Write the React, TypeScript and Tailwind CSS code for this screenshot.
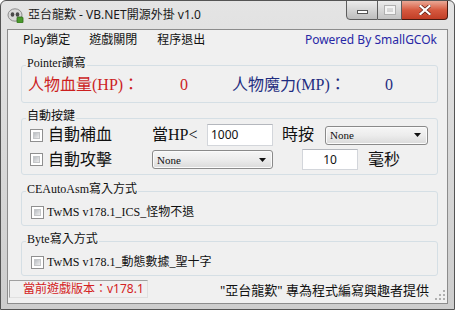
import React from "react";

const SERIF = "font-['Liberation_Serif','Noto_Sans_CJK_TC',serif]";
const SANS = "font-['Noto_Sans','Noto_Sans_CJK_TC',sans-serif]";

function Check() {
  return (
    <span className="w-[13px] h-[13px] border border-[#8f8f8f] bg-white p-[2px] flex shrink-0">
      <span className="flex-1 bg-linear-to-br from-[#b9bdc2] to-[#eeeeee] border border-[#c4c6c8]" />
    </span>
  );
}

function Arrow() {
  return (
    <svg width="7" height="4" viewBox="0 0 7 4" className="ml-auto shrink-0">
      <path d="M0 0H7L3.5 4Z" fill="#111" />
    </svg>
  );
}

function Select({ w, h }: { w: string; h: string }) {
  return (
    <div
      className={`${w} ${h} rounded-[3px] border border-[#8a8a8a] bg-linear-to-b from-[#f6f6f6] via-[#ececec] to-[#dadada] flex items-center pl-[4px] pr-[6px] shadow-[inset_0_0_0_1px_#fbfbfb]`}
    >
      <span className={`${SERIF} text-[11px] leading-[12px] text-[#111]`}>None</span>
      <Arrow />
    </div>
  );
}

function Group({
  label,
  className,
  children,
}: {
  label: string;
  className: string;
  children: React.ReactNode;
}) {
  return (
    <div className={`relative border border-[#d5dfe5] rounded-[3px] ${className}`}>
      <span
        className={`absolute top-[-9px] left-[4px] bg-[#f0f0f0] px-[1px] ${SERIF} text-[12px] leading-[13px] text-[#111] whitespace-nowrap`}
      >
        {label}
      </span>
      {children}
    </div>
  );
}

export default function App() {
  return (
    <div className="w-[455px] h-[310px] border border-[#545454] rounded-t-[6px] bg-linear-to-b from-[#e4e4e4] to-[#cdcdcd] flex flex-col overflow-hidden">
      {/* Title bar */}
      <div className="h-[28px] flex items-start shrink-0">
        <div className="flex items-center h-[28px] pl-[6px]">
          <svg width="17" height="16" viewBox="0 0 17 16">
            <ellipse cx="8" cy="8" rx="7" ry="6.2" fill="#d8d8d8" stroke="#8d8d8d" strokeWidth="1" />
            <ellipse cx="5.5" cy="7.5" rx="1.8" ry="2.2" fill="#4a4a4a" />
            <ellipse cx="10.5" cy="7.5" rx="1.8" ry="2.2" fill="#4a4a4a" />
            <rect x="10" y="10" width="6" height="6" rx="1" fill="#4b9a2d" stroke="#2f6a1a" strokeWidth="0.8" />
          </svg>
          <span className={`${SANS} ml-[4px] text-[12px] leading-[14px] text-[#1a1a1a]`}>
            亞台龍歎 - VB.NET開源外掛 v1.0
          </span>
        </div>
        <div className="ml-auto mr-[6px] flex h-[20px] -mt-[1px]">
          <div className="w-[32px] h-[20px] border border-[#5d5d5d] rounded-bl-[4px] bg-linear-to-b from-[#ececec] to-[#bdbdbd] flex items-center justify-center">
            <span className="w-[11px] h-[4px] bg-white border border-[#555] mt-[4px]" />
          </div>
          <div className="w-[24px] h-[20px] border-y border-r border-[#5d5d5d] bg-linear-to-b from-[#ececec] to-[#c3c3c3] flex items-center justify-center">
            <span className="w-[10px] h-[8px] border-[2px] border-[#f4f4f4] outline outline-1 outline-[#b0b0b0]" />
          </div>
          <div className="w-[46px] h-[20px] border-y border-r border-[#4a1a10] rounded-br-[4px] bg-linear-to-b from-[#e9a896] via-[#d6593f] to-[#c13e26] flex items-center justify-center">
            <svg width="12" height="10" viewBox="0 0 12 10">
              <path d="M1.5 1L10.5 9M10.5 1L1.5 9" stroke="#5a1a10" strokeWidth="3.6" strokeLinecap="square" />
              <path d="M1.5 1L10.5 9M10.5 1L1.5 9" stroke="#ffffff" strokeWidth="2.2" strokeLinecap="square" />
            </svg>
          </div>
        </div>
      </div>

      {/* Frame + client */}
      <div className="flex flex-1 px-[6px] pb-[5px]">
        <div className="flex-1 border border-[#8c8c8c] bg-[#f0f0f0] flex flex-col">
          {/* Menu */}
          <div className={`h-[18px] flex items-center ${SANS} text-[12px] leading-[14px] text-[#111] shrink-0 pt-[2px]`}>
            <span className="ml-[15px]">Play鎖定</span>
            <span className="ml-[19px]">遊戲關閉</span>
            <span className="ml-[20px]">程序退出</span>
            <span className="ml-auto mr-[10px] text-[#2828a6]">Powered By SmallGCOk</span>
          </div>

          <div className="flex flex-col pl-[13px] pr-[9px]">
            {/* Pointer */}
            <Group label="Pointer讀寫" className="mt-[17px] h-[38px] flex items-center pl-[6px]">
              <div className={`flex items-center ${SERIF} text-[16px] leading-[18px] pt-[1px]`}>
                <span className="w-[152px] text-[#cc1f1f]">人物血量(HP)：</span>
                <span className="w-[52px] text-[#cc1f1f]">0</span>
                <span className="w-[153px] text-[#1f2d80]">人物魔力(MP)：</span>
                <span className="text-[#1f2d80]">0</span>
              </div>
            </Group>

            {/* Auto keys */}
            <Group label="自動按鍵" className="mt-[15px] h-[57px] pl-[8px] pt-[5px]">
              <div className="flex items-center h-[22px]">
                <Check />
                <span className={`ml-[5px] w-[104px] ${SERIF} text-[16px] leading-[18px] text-[#111]`}>自動補血</span>
                <span className={`w-[55px] ${SERIF} text-[16px] leading-[18px] text-[#111]`}>當HP&lt;</span>
                <div className="w-[66px] h-[22px] bg-white border border-[#d3d6db] border-t-[#b4b7bd] flex items-center pl-[3px]">
                  <span className={`${SANS} text-[12px] leading-[12px] text-[#111]`}>1000</span>
                </div>
                <span className={`ml-[9px] w-[43px] ${SERIF} text-[16px] leading-[18px] text-[#111]`}>時按</span>
                <Select w="w-[103px]" h="h-[19px]" />
              </div>
              <div className="flex items-center h-[21px] mt-[3px]">
                <Check />
                <span className={`ml-[5px] w-[104px] ${SERIF} text-[16px] leading-[18px] text-[#111]`}>自動攻擊</span>
                <Select w="w-[121px]" h="h-[19px]" />
                <div className="ml-[29px] w-[56px] h-[21px] bg-white border border-[#d3d6db] border-t-[#b4b7bd] flex items-center justify-center">
                  <span className={`${SANS} text-[12px] leading-[12px] text-[#111]`}>10</span>
                </div>
                <span className={`ml-[10px] ${SERIF} text-[16px] leading-[18px] text-[#111]`}>毫秒</span>
              </div>
            </Group>

            {/* CEAutoAsm */}
            <Group label="CEAutoAsm寫入方式" className="mt-[16px] h-[35px] pl-[9px] pt-[12px]">
              <div className="flex items-center h-[16px]">
                <Check />
                <span className={`ml-[3px] ${SERIF} text-[12px] leading-[14px] text-[#111]`}>TwMS v178.1_ICS_怪物不退</span>
              </div>
            </Group>

            {/* Byte */}
            <Group label="Byte寫入方式" className="mt-[15px] h-[35px] pl-[9px] pt-[12px]">
              <div className="flex items-center h-[16px]">
                <Check />
                <span className={`ml-[3px] ${SERIF} text-[12px] leading-[14px] text-[#111]`}>TwMS v178.1_動態數據_聖十字</span>
              </div>
            </Group>
          </div>

          {/* Status bar */}
          <div className="mt-auto h-[24px] flex items-start pt-[1px] pl-[1px]">
            <div className="w-[139px] h-[18px] border border-[#a0a0a0] border-r-[#e0e0e0] border-b-[#e0e0e0] flex items-center pl-[13px]">
              <span className={`${SANS} text-[12px] leading-[14px] text-[#d42222]`}>當前遊戲版本：v178.1</span>
            </div>
            <div className="ml-auto flex items-start h-full">
              <span className={`${SANS} text-[13px] leading-[18px] text-[#111] mt-[1px]`}>"亞台龍歎" 專為程式編寫興趣者提供</span>
              <svg width="14" height="14" viewBox="0 0 14 14" className="ml-[4px] mt-[8px]">
                <rect x="10" y="2" width="2" height="2" fill="#b0b0b0" />
                <rect x="6" y="6" width="2" height="2" fill="#b0b0b0" />
                <rect x="10" y="6" width="2" height="2" fill="#b0b0b0" />
                <rect x="2" y="10" width="2" height="2" fill="#b0b0b0" />
                <rect x="6" y="10" width="2" height="2" fill="#b0b0b0" />
                <rect x="10" y="10" width="2" height="2" fill="#b0b0b0" />
              </svg>
            </div>
          </div>
        </div>
      </div>
    </div>
  );
}
